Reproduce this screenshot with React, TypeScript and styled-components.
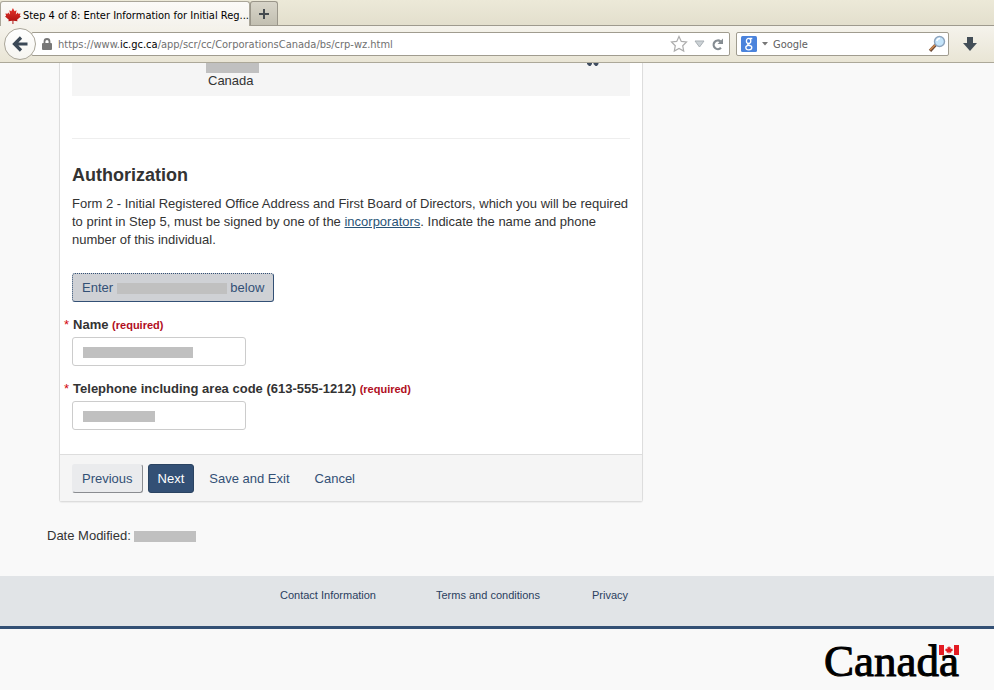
import React from "react";
import styled, { createGlobalStyle, css } from "styled-components";

const GlobalStyle = createGlobalStyle`
  * { box-sizing: border-box; }
  html, body, #root { height: 100%; }
  body {
    margin: 0;
    background: #f9f9f9;
    color: #333;
    font-family: "Liberation Sans", Arial, sans-serif;
    font-size: 13px;
    line-height: 19px;
  }
  button, input { font: inherit; margin: 0; }
`;

const Window = styled.div`
  display: flex;
  flex-direction: column;
  min-height: 100%;
`;

/* Browser chrome */

const Chrome = styled.header`
  font-family: "DejaVu Sans Condensed", Tahoma, sans-serif;
  font-size: 11px;
  line-height: 16px;
`;

const TabStrip = styled.div`
  display: flex;
  align-items: flex-end;
  height: 26px;
  background: linear-gradient(#ece9d8, #e3dfcd);
  border-bottom: 1px solid #9e9a8e;
`;

const Tab = styled.div`
  display: flex;
  align-items: center;
  gap: 2px;
  width: 250px;
  height: 25px;
  padding: 4px 0 0 4px;
  margin-bottom: -1px;
  background: linear-gradient(#fbfaf8, #f4f2ec);
  border: 1px solid #aaa699;
  border-bottom: 0;
  border-radius: 3px 3px 0 0;
  color: #000;
  white-space: nowrap;
`;

const NewTab = styled.button`
  display: grid;
  place-items: center;
  width: 28px;
  height: 24px;
  padding: 0;
  background: linear-gradient(#d8d5c9, #c2bfb1);
  border: 1px solid #9a968a;
  border-bottom: 0;
  border-radius: 3px 3px 0 0;
`;

const Toolbar = styled.div`
  display: flex;
  align-items: center;
  height: 37px;
  padding: 0 16px 0 4px;
  background: linear-gradient(#f5f3ec, #e9e5d5);
  border-bottom: 1px solid #aca899;
`;

const BackButton = styled.button`
  z-index: 1;
  display: grid;
  place-items: center;
  flex: none;
  width: 32px;
  height: 32px;
  margin-right: -5px;
  padding: 0;
  background: linear-gradient(#fff, #f6f5f0);
  border: 1px solid #aaa699;
  border-radius: 50%;
`;

const Field = styled.div`
  display: flex;
  align-items: center;
  height: 24px;
  background: #fff;
  border: 1px solid #a09c8f;
  border-radius: 2px;
`;

const AddressField = styled(Field)`
  flex: 1;
  gap: 6px;
  margin-right: 6px;
  padding: 0 5px 0 10px;
`;

const SearchField = styled(Field)`
  width: 213px;
  gap: 5px;
  margin-right: 13px;
  padding: 0 2px 0 4px;
`;

const Address = styled.div`
  flex: 1;
  padding-top: 2px;
  color: #707070;
  white-space: nowrap;
  b { color: #000; font-weight: normal; }
`;

const SearchInput = styled.input`
  flex: 1;
  min-width: 0;
  padding: 2px 0 0;
  background: none;
  border: 0;
  outline: 0;
  &::placeholder { color: #606060; opacity: 1; }
`;

const IconButton = styled.button`
  display: grid;
  place-items: center;
  padding: 0;
  background: none;
  border: 0;
`;

/* Page */

const Main = styled.main`
  flex: none;
  padding: 0 47px;
`;

const Panel = styled.section`
  max-width: 584px;
  margin-left: 12px;
  background: #fff;
  border: 1px solid #ddd;
  border-top: 0;
  border-radius: 0 0 3px 3px;
  box-shadow: 0 1px 1px #0000000d;
`;

const PanelBody = styled.div`
  padding: 0 12px 24px;
`;

const AddressRow = styled.div`
  display: flex;
  justify-content: space-between;
  height: 33px;
  padding: 0 31px 0 134px;
  background: #f5f5f5;
`;

const Redaction = styled.span<{ $w: number; $h?: number }>`
  display: inline-block;
  width: ${(p) => p.$w}px;
  height: ${(p) => p.$h ?? 11}px;
  background: #c0c0c0;
  vertical-align: -2px;
`;

const Country = styled.div`
  display: flex;
  flex-direction: column;
  line-height: 15px;
  span + span { padding-left: 2px; }
`;

const Rule = styled.hr`
  height: 1px;
  margin: 42px 0 0;
  background: #eee;
  border: 0;
`;

const Heading = styled.h2`
  margin: 24px 0 8px;
  font-size: 18px;
  line-height: 24px;
`;

const Paragraph = styled.p`
  margin: 0 0 24px;
  line-height: 18px;
`;

const TextLink = styled.a`
  color: #295376;
  text-decoration: underline;
`;

const buttonKinds = {
  focused: css`
    background: #cfd1d5;
    border: 1px dotted #335075;
    border-right-style: solid;
    border-bottom-style: solid;
  `,
  raised: css`
    background: #eaebed;
    border: 1px solid #eaebed;
    border-right-color: #8a8c90;
    border-bottom-color: #8a8c90;
  `,
  primary: css`
    background: #335075;
    border: 1px solid #2a4361;
    color: #fff;
  `,
  link: css`
    background: none;
    border: 1px solid transparent;
  `,
};

const Button = styled.button<{ $kind: keyof typeof buttonKinds }>`
  height: 29px;
  padding: 0 9px;
  border-radius: 3px;
  color: #335075;
  white-space: nowrap;
  ${(p) => buttonKinds[p.$kind]}
`;

const FormGroup = styled.div`
  display: flex;
  flex-direction: column;
  align-items: flex-start;
  margin-top: 13px;
`;

const Label = styled.label`
  margin: 0 0 2px -8px;
  font-weight: bold;
`;

const Star = styled.span`
  margin-right: 4px;
  color: #d3080c;
  font-weight: normal;
`;

const Required = styled.strong`
  color: #b10e1e;
  font-size: 11px;
`;

const InputBox = styled.div`
  position: relative;
  width: 174px;
  ${Redaction} {
    position: absolute;
    left: 11px;
    top: 10px;
  }
`;

const TextInput = styled.input`
  display: block;
  width: 100%;
  height: 29px;
  padding: 0 10px;
  background: #fff;
  border: 1px solid #ccc;
  border-radius: 3px;
`;

const PanelFooter = styled.footer`
  display: flex;
  align-items: center;
  gap: 5px;
  height: 47px;
  padding: 0 12px;
  background: #f5f5f5;
  border-top: 1px solid #ddd;
`;

const Modified = styled.p`
  margin: 24px 0 31px;
`;

const SiteLinks = styled.nav`
  display: grid;
  grid-template-columns: repeat(3, 156px);
  align-items: start;
  height: 53px;
  padding: 10px 0 0 280px;
  background: #e1e4e7;
  border-bottom: 3px solid #335075;
  font-size: 11px;
  a { color: #2a4060; text-decoration: none; }
`;

const Brand = styled.footer`
  display: flex;
  justify-content: flex-end;
  padding: 7px 35px 0 0;
`;

const Wordmark = styled.div`
  position: relative;
  color: #000;
  font-family: "Liberation Serif", "Times New Roman", serif;
  font-size: 45px;
  line-height: 50px;
  -webkit-text-stroke: 1px #000;
  svg { position: absolute; right: 0; top: 9px; }
`;

const leaf =
  "M10 0L12 4L14.5 2.8L13.6 8L16 5.6L16.7 7.3L19.5 6.8L18.6 9.8L20 10.6L15.2 14.6L15.8 16.6L10.6 16L10.6 20H9.4L9.4 16L4.2 16.6L4.8 14.6L0 10.6L1.4 9.8L.5 6.8L3.3 7.3L4 5.6L6.4 8L5.5 2.8L8 4Z";

const MapleLeaf = () => (
  <svg width="16" height="16" viewBox="0 0 20 20" aria-hidden="true">
    <defs>
      <linearGradient id="leaf" x2="0" y2="1">
        <stop stopColor="#e5342c" />
        <stop offset="1" stopColor="#a60d0d" />
      </linearGradient>
    </defs>
    <path d={leaf} fill="url(#leaf)" />
  </svg>
);

const Flag = () => (
  <svg width="20" height="10" viewBox="0 0 20 10" aria-hidden="true">
    <path d="M0 0H20V10H0Z" fill="#f9f9f9" />
    <path d="M0 0H5V10H0ZM15 0H20V10H15Z" fill="#e31b23" />
    <path d={leaf} fill="#e31b23" transform="translate(6 1) scale(.4)" />
  </svg>
);

const PlusIcon = () => (
  <svg width="12" height="12" viewBox="0 0 12 12" aria-hidden="true">
    <path d="M6 1V11M1 6H11" stroke="#454b50" strokeWidth="2" />
  </svg>
);

const BackIcon = () => (
  <svg width="18" height="18" viewBox="0 0 18 18" aria-hidden="true">
    <path d="M10 2.5L3.5 9L10 15.5M4 9H16.5" fill="none" stroke="#3b4856" strokeWidth="3.2" />
  </svg>
);

const LockIcon = () => (
  <svg width="10" height="12" viewBox="0 0 10 12" aria-hidden="true">
    <path d="M2.5 6V3.5a2.5 2.5 0 0 1 5 0V6" fill="none" stroke="#777" strokeWidth="1.8" />
    <rect y="5" width="10" height="7" rx="1" fill="#777" />
  </svg>
);

const StarIcon = () => (
  <svg width="18" height="18" viewBox="0 0 18 18" aria-hidden="true">
    <path
      d="M9 1.5L11.3 6.4L16.5 7L12.7 10.7L13.7 16L9 13.4L4.3 16L5.3 10.7L1.5 7L6.7 6.4Z"
      fill="#fff"
      stroke="#adadad"
      strokeWidth="1.2"
    />
  </svg>
);

const DropIcon = () => (
  <svg width="11" height="8" viewBox="0 0 11 8" aria-hidden="true">
    <path d="M1 1H10L5.5 7Z" fill="#ccd2d6" stroke="#a8afb4" />
  </svg>
);

const ReloadIcon = () => (
  <svg width="13" height="13" viewBox="0 0 13 13" aria-hidden="true">
    <path d="M9.5 3.3A4.3 4.3 0 1 0 10 9.8" fill="none" stroke="#858c92" strokeWidth="2.2" />
    <path d="M12 .5V6H6.5Z" fill="#858c92" />
  </svg>
);

const SearchEngineIcon = () => (
  <svg width="16" height="16" viewBox="0 0 16 16" aria-hidden="true">
    <rect width="16" height="16" rx="1.5" fill="#4a83dc" />
    <g fill="none" stroke="#fff" strokeWidth="1.3">
      <ellipse cx="7.6" cy="4.9" rx="2.2" ry="2.5" />
      <path d="M8.5 2.5H11.3M7 7.3C5.8 8.7 7.6 8.8 9.2 9.6" />
      <ellipse cx="7.8" cy="11.6" rx="3" ry="2.2" />
    </g>
  </svg>
);

const CaretIcon = () => (
  <svg width="6" height="4" viewBox="0 0 6 4" aria-hidden="true">
    <path d="M0 0H6L3 3.5Z" fill="#777" />
  </svg>
);

const MagnifierIcon = () => (
  <svg width="18" height="18" viewBox="0 0 18 18" aria-hidden="true">
    <path d="M7.5 10L2 15.8" stroke="#6b4a38" strokeWidth="3.2" />
    <path d="M7 10L2 15" stroke="#d38a4e" strokeWidth="1.6" />
    <circle cx="11.5" cy="6.5" r="5" fill="#c4e4fa" stroke="#8da4bd" strokeWidth="1.4" />
    <path d="M8.8 6A3 3 0 0 1 12 3.6" fill="none" stroke="#fff" strokeWidth="1.5" />
  </svg>
);

const DownloadIcon = () => (
  <svg width="16" height="16" viewBox="0 0 16 16" aria-hidden="true">
    <path d="M5 1H11V7H15L8 15L1 7H5Z" fill="#434e57" />
  </svg>
);

const MarkerIcon = () => (
  <svg width="12" height="3" viewBox="0 0 12 3" aria-hidden="true">
    <path d="M0 0H5V1L3.5 3H2L0 1ZM6.5 0H11.5V1L10 3H8.5L6.5 1Z" fill="#3f4d60" />
  </svg>
);

interface RedactedInputProps {
  id: string;
  label: string;
  type: string;
  covered: number;
}

const RedactedInput = ({ id, label, type, covered }: RedactedInputProps) => (
  <FormGroup>
    <Label htmlFor={id}>
      <Star>*</Star>
      {label} <Required>(required)</Required>
    </Label>
    <InputBox>
      <TextInput id={id} type={type} required />
      <Redaction $w={covered} />
    </InputBox>
  </FormGroup>
);

export default function App() {
  return (
    <Window>
      <GlobalStyle />
      <Chrome>
        <TabStrip>
          <Tab>
            <MapleLeaf />
            <span>Step 4 of 8: Enter Information for Initial Reg...</span>
          </Tab>
          <NewTab aria-label="New tab"><PlusIcon /></NewTab>
        </TabStrip>
        <Toolbar>
          <BackButton aria-label="Back"><BackIcon /></BackButton>
          <AddressField>
            <LockIcon />
            <Address>
              https://www.<b>ic.gc.ca</b>/app/scr/cc/CorporationsCanada/bs/crp-wz.html
            </Address>
            <IconButton aria-label="Bookmark"><StarIcon /></IconButton>
            <IconButton aria-label="History"><DropIcon /></IconButton>
            <IconButton aria-label="Reload"><ReloadIcon /></IconButton>
          </AddressField>
          <SearchField>
            <SearchEngineIcon />
            <CaretIcon />
            <SearchInput type="search" placeholder="Google" aria-label="Search" />
            <IconButton aria-label="Search"><MagnifierIcon /></IconButton>
          </SearchField>
          <IconButton aria-label="Downloads"><DownloadIcon /></IconButton>
        </Toolbar>
      </Chrome>

      <Main>
        <Panel>
          <PanelBody>
            <AddressRow>
              <Country>
                <Redaction $w={53} $h={10} />
                <span>Canada</span>
              </Country>
              <MarkerIcon />
            </AddressRow>
            <Rule />
            <Heading>Authorization</Heading>
            <Paragraph>
              Form 2 - Initial Registered Office Address and First Board of Directors, which you will be required
              to print in Step 5, must be signed by one of the <TextLink href="#incorporators">incorporators</TextLink>.
              Indicate the name and phone number of this individual.
            </Paragraph>
            <Button $kind="focused">
              Enter <Redaction $w={110} /> below
            </Button>
            <RedactedInput id="name" label="Name" type="text" covered={110} />
            <RedactedInput
              id="telephone"
              label="Telephone including area code (613-555-1212)"
              type="tel"
              covered={72}
            />
          </PanelBody>
          <PanelFooter>
            <Button $kind="raised">Previous</Button>
            <Button $kind="primary">Next</Button>
            <Button $kind="link">Save and Exit</Button>
            <Button $kind="link">Cancel</Button>
          </PanelFooter>
        </Panel>
        <Modified>
          Date Modified: <Redaction $w={62} />
        </Modified>
      </Main>

      <SiteLinks aria-label="Site">
        <a href="#contact">Contact Information</a>
        <a href="#terms">Terms and conditions</a>
        <a href="#privacy">Privacy</a>
      </SiteLinks>
      <Brand>
        <Wordmark>
          Canada
          <Flag />
        </Wordmark>
      </Brand>
    </Window>
  );
}
